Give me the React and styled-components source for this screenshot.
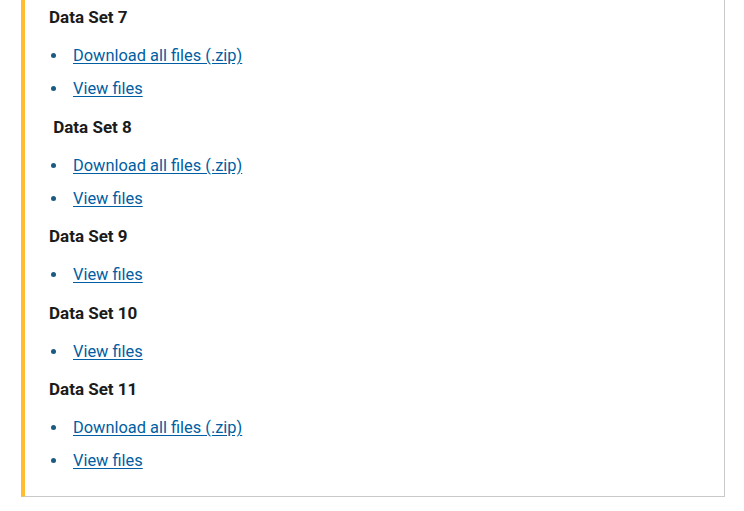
import React from "react";
import styled, { createGlobalStyle } from "styled-components";

const Global = createGlobalStyle`
  html, body { margin: 0; padding: 0; background: #fff; }
  body { font-family: Roboto, "Liberation Sans", Arial, sans-serif; color: #1b1b1b; }
`;

const Page = styled.div`
  padding: 0 19px 0 21px;
`;

const Panel = styled.section`
  width: 704px;
  box-sizing: border-box;
  border-left: 4px solid #ffbe2e;
  border-right: 1px solid #c9c9c9;
  border-bottom: 1px solid #c9c9c9;
  padding: 5px 24px 23px 24px;
`;

const SetTitle = styled.h4`
  margin: 0;
  font-size: 17px;
  line-height: 24px;
  font-weight: 700;
  color: #1b1b1b;
`;

const FileList = styled.ul`
  margin: 15px 0 13.6px;
  padding-left: 19px;
  &:last-child { margin-bottom: 0; }
`;

const FileItem = styled.li`
  padding-left: 5px;
  font-size: 16.4px;
  line-height: 24px;
  color: #1b5b83;
  & + & { margin-top: 9px; }
`;

const FileLink = styled.a`
  color: #005ea2;
  text-decoration: underline;
  text-underline-offset: 2px;
`;

const sets = [
  { title: "Data Set 7", zip: true },
  { title: "\u00A0Data Set 8", zip: true },
  { title: "Data Set 9", zip: false },
  { title: "Data Set 10", zip: false },
  { title: "Data Set 11", zip: true },
];

export default function App() {
  return (
    <>
      <Global />
      <Page>
        <Panel>
          {sets.map((s) => (
            <React.Fragment key={s.title}>
              <SetTitle>{s.title}</SetTitle>
              <FileList>
                {s.zip && (
                  <FileItem>
                    <FileLink href="#">Download all files (.zip)</FileLink>
                  </FileItem>
                )}
                <FileItem>
                  <FileLink href="#">View files</FileLink>
                </FileItem>
              </FileList>
            </React.Fragment>
          ))}
        </Panel>
      </Page>
    </>
  );
}
